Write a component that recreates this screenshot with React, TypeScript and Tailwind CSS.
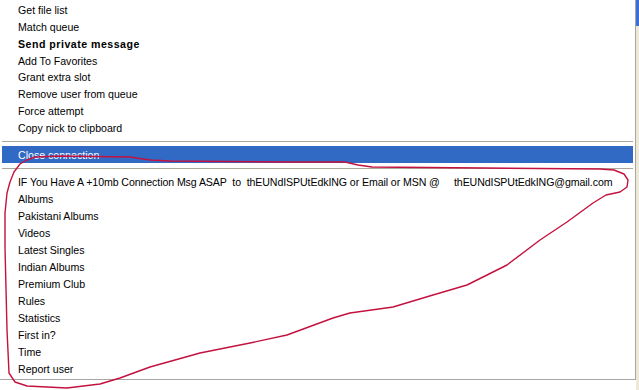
const topItems = [
  { label: "Get file list" },
  { label: "Match queue" },
  { label: "Send private message", bold: true },
  { label: "Add To Favorites" },
  { label: "Grant extra slot" },
  { label: "Remove user from queue" },
  { label: "Force attempt" },
  { label: "Copy nick to clipboard" },
];

const hubItems = [
  "IF You Have A +10mb Connection Msg ASAP  to  thEUNdISPUtEdkING or Email or MSN @     thEUNdISPUtEdkING@gmail.com",
  "Albums",
  "Pakistani Albums",
  "Videos",
  "Latest Singles",
  "Indian Albums",
  "Premium Club",
  "Rules",
  "Statistics",
  "First in?",
  "Time",
  "Report user",
];

const scribble = [
  [10, 182], [14, 172], [20, 164], [27, 160], [35, 157], [60, 156], [130, 157],
  [150, 160], [170, 161], [290, 162], [345, 162], [358, 165], [372, 167],
  [600, 169], [614, 170], [624, 174], [628, 180], [627, 187], [620, 192],
  [606, 195], [593, 203], [567, 222], [540, 240], [507, 265], [467, 285],
  [433, 295], [393, 307], [350, 313], [333, 318], [287, 335], [250, 343],
  [200, 353], [150, 367], [120, 378], [100, 384], [67, 388], [27, 386],
  [15, 382], [9, 373], [7, 330], [5, 247], [5, 213], [7, 193], [10, 182],
];

function Row({
  label,
  bold,
  active,
  tight,
}: {
  label: string;
  bold?: boolean;
  active?: boolean;
  tight?: boolean;
}) {
  return (
    <div
      className={`h-[17px] flex items-center pl-4 pt-[3px] whitespace-pre ${
        active ? "bg-[#316ac5] text-white" : "text-black"
      } ${bold ? "font-bold tracking-[0.5px]" : ""} ${tight ? "tracking-[-0.09px]" : ""}`}
    >
      {label}
    </div>
  );
}

function Separator() {
  return (
    <div className="h-[10px] pt-[5px]">
      <div className="h-px bg-[#aca899]" />
    </div>
  );
}

export default function App() {
  return (
    <div
      className="relative w-[639px] h-[390px] overflow-hidden bg-white flex text-[10.6px] leading-none"
      style={{ fontFamily: "Tahoma, 'Liberation Sans', Arial, sans-serif" }}
    >
      <div className="w-[636px] h-[380px] shrink-0 border-r border-b border-[#a7a6a0] pl-[2px] pr-[2px] pb-[3px] flex flex-col">
        {topItems.map((it) => (
          <Row key={it.label} label={it.label} bold={it.bold} />
        ))}
        <Separator />
        <Row label="Close connection" active />
        <Separator />
        {hubItems.map((l, i) => (
          <Row key={l} label={l} tight={i === 0} />
        ))}
      </div>
      <div className="flex-1 flex flex-col">
        <div className="h-[26px] bg-[#3b6fd6]" />
        <div className="flex-1 bg-[#ece9d8]" />
      </div>

      <svg className="absolute inset-0 pointer-events-none" width={639} height={390}>
        <polyline
          points={scribble.map((p) => p.join(",")).join(" ")}
          fill="none"
          stroke="#c3123f"
          strokeWidth={1.4}
          strokeLinejoin="round"
          strokeLinecap="round"
        />
      </svg>
    </div>
  );
}
